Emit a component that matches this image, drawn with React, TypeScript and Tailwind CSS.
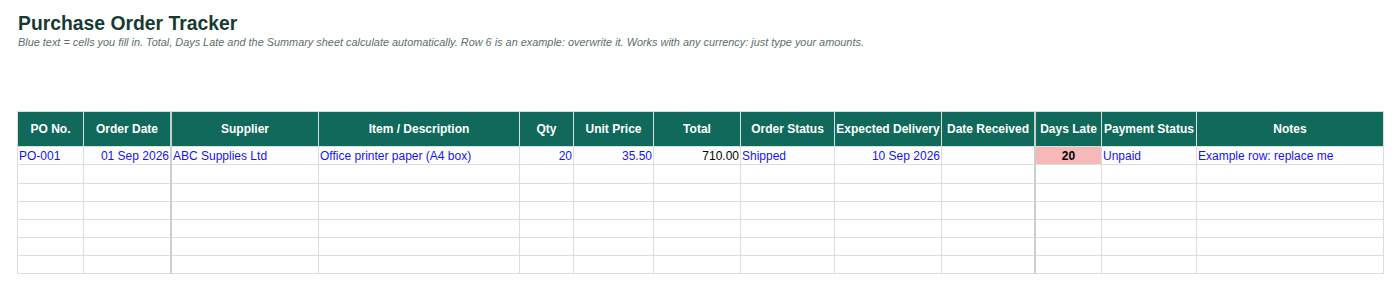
const columns = [
  { label: "PO No.", w: "w-[66px]" },
  { label: "Order Date", w: "w-[88px]" },
  { label: "Supplier", w: "w-[147px]" },
  { label: "Item / Description", w: "w-[201px]" },
  { label: "Qty", w: "w-[54px]" },
  { label: "Unit Price", w: "w-[80px]" },
  { label: "Total", w: "w-[87px]" },
  { label: "Order Status", w: "w-[94px]" },
  { label: "Expected Delivery", w: "w-[107px]" },
  { label: "Date Received", w: "w-[94px]" },
  { label: "Days Late", w: "w-[66px]" },
  { label: "Payment Status", w: "w-[95px]" },
  { label: "Notes", w: "w-[187px]" },
];

// columns that carry the heavier divider on their right edge
const thick = new Set([1, 9]);

type Cell = { text: string; align?: "left" | "right" | "center"; tone?: "input" | "calc" | "late" };

const example: Cell[] = [
  { text: "PO-001", tone: "input" },
  { text: "01 Sep 2026", align: "right", tone: "input" },
  { text: "ABC Supplies Ltd", tone: "input" },
  { text: "Office printer paper (A4 box)", tone: "input" },
  { text: "20", align: "right", tone: "input" },
  { text: "35.50", align: "right", tone: "input" },
  { text: "710.00", align: "right", tone: "calc" },
  { text: "Shipped", tone: "input" },
  { text: "10 Sep 2026", align: "right", tone: "input" },
  { text: "" },
  { text: "20", align: "center", tone: "late" },
  { text: "Unpaid", tone: "input" },
  { text: "Example row: replace me", tone: "input" },
];

const rowHeights = ["h-[18px]", "h-[19px]", "h-[18px]", "h-[18px]", "h-[18px]", "h-[18px]", "h-[18px]"];

function borderFor(i: number) {
  return thick.has(i) ? "border-r-2 border-r-[#c9d0ce]" : "border-r border-r-[#d9dfdd]";
}

export default function App() {
  return (
    <div className="h-[290px] w-[1400px] bg-white font-['Liberation_Sans',Arial,sans-serif]">
      <div className="pl-[18px] pt-[13px]">
        <h1 className="text-[19.33px] font-bold leading-[22px] text-[#163a33]">Purchase Order Tracker</h1>
        <p className="mt-px text-[10.9px] italic leading-[13px] text-[#5b6f6b]">
          Blue text = cells you fill in. Total, Days Late and the Summary sheet calculate automatically. Row 6 is an
          example: overwrite it. Works with any currency: just type your amounts.
        </p>
      </div>

      <div className="ml-[17px] mt-[62px] inline-flex flex-col border-l border-t border-[#d9dfdd] text-[12px]">
        <div className="flex h-[35px]">
          {columns.map((c, i) => (
            <div
              key={c.label}
              className={`${c.w} ${borderFor(i)} flex items-center justify-center whitespace-nowrap border-b border-b-[#d9dfdd] bg-[#10695a] font-bold text-white`}
            >
              {c.label}
            </div>
          ))}
        </div>

        {rowHeights.map((h, r) => (
          <div key={r} className={`flex ${h}`}>
            {columns.map((c, i) => {
              const cell = r === 0 ? example[i] : { text: "" };
              const align =
                cell.align === "right" ? "justify-end" : cell.align === "center" ? "justify-center" : "justify-start";
              const tone =
                cell.tone === "input"
                  ? "text-[#1414f5]"
                  : cell.tone === "late"
                    ? "bg-[#f5b9b8] font-bold text-black"
                    : "text-black";
              return (
                <div
                  key={c.label}
                  className={`${c.w} ${borderFor(i)} ${align} ${tone} flex items-center overflow-hidden whitespace-nowrap border-b border-b-[#d9dfdd] px-px leading-none`}
                >
                  {cell.text}
                </div>
              );
            })}
          </div>
        ))}
      </div>
    </div>
  );
}
